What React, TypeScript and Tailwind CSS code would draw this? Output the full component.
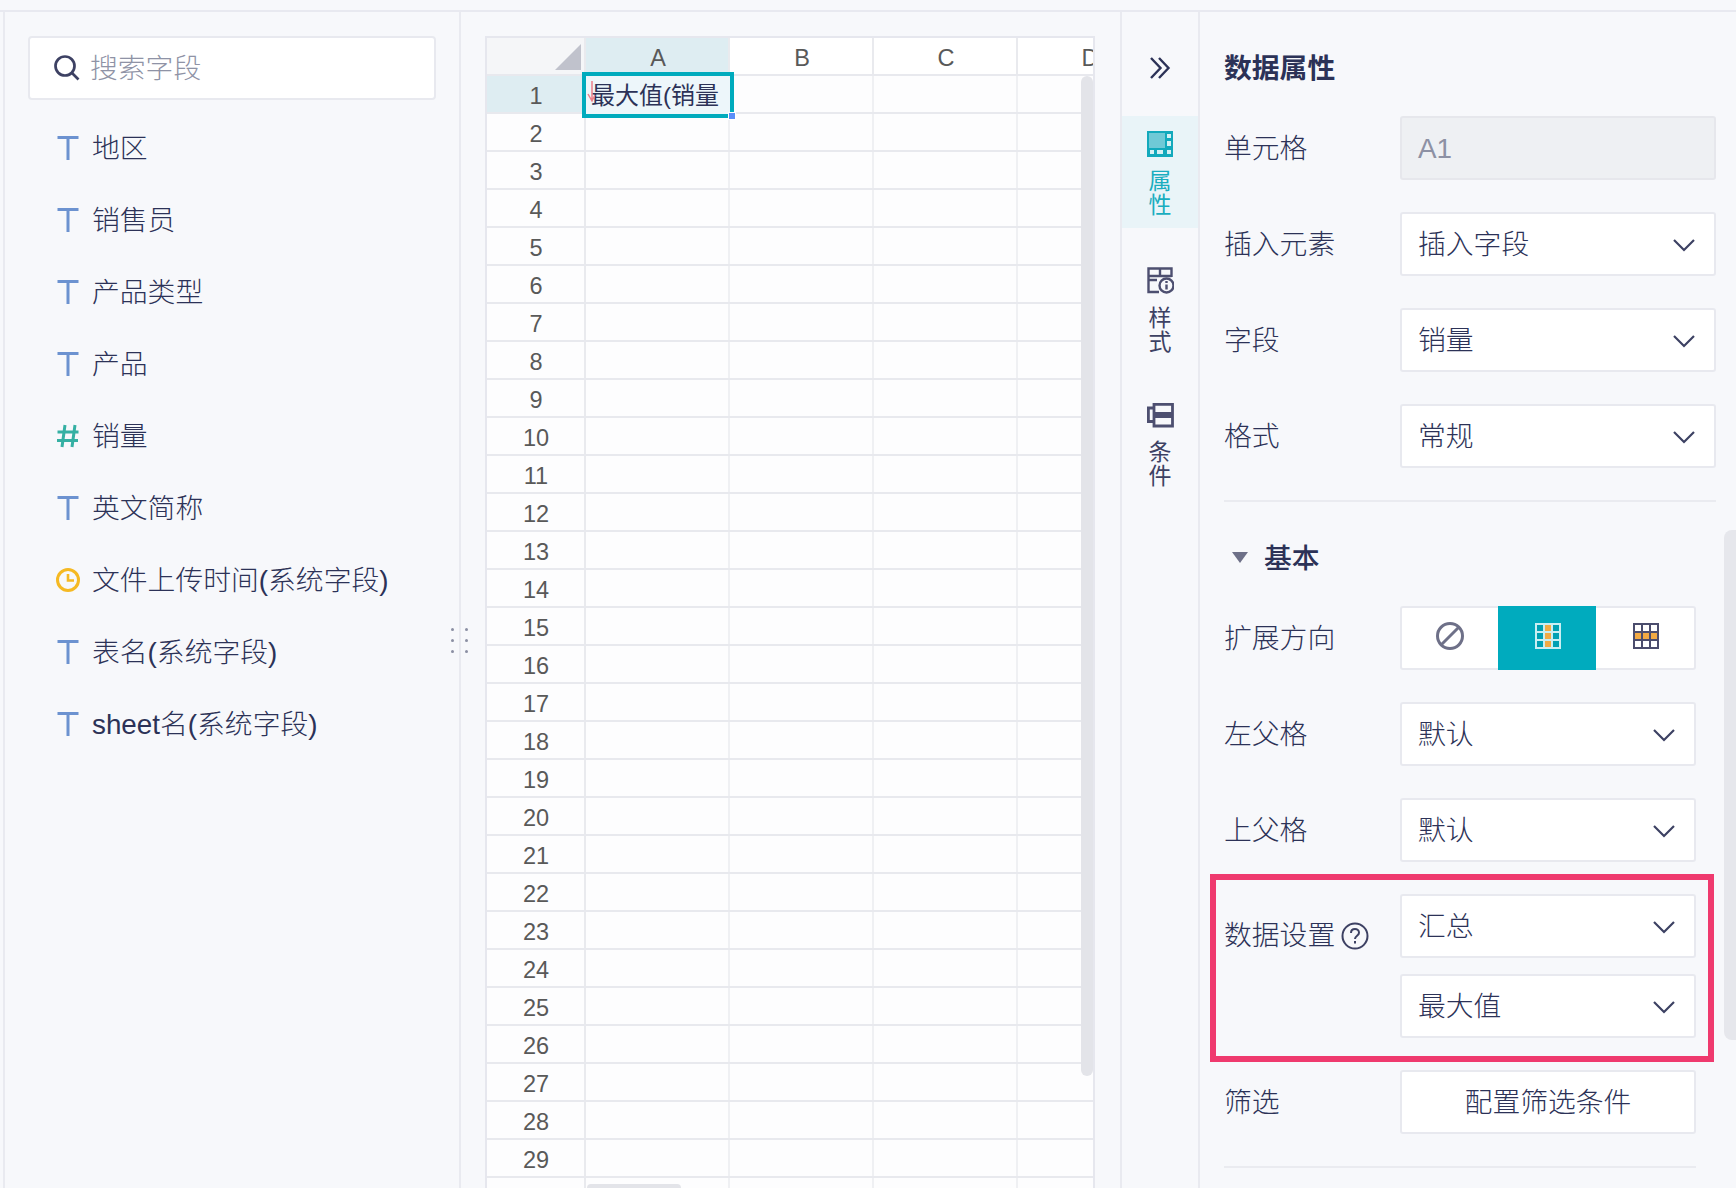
import type { ReactNode } from "react";

const fields = [
  { icon: "t", name: "地区" },
  { icon: "t", name: "销售员" },
  { icon: "t", name: "产品类型" },
  { icon: "t", name: "产品" },
  { icon: "n", name: "销量" },
  { icon: "t", name: "英文简称" },
  { icon: "c", name: "文件上传时间(系统字段)" },
  { icon: "t", name: "表名(系统字段)" },
  { icon: "t", name: "sheet名(系统字段)" },
];

const rows = Array.from({ length: 30 }, (_, i) => i + 1);

function FieldIcon({ kind }: { kind: string }) {
  if (kind === "n") {
    return (
      <svg width="26" height="26" viewBox="0 0 26 26" fill="none" stroke="#35b0a3" strokeWidth="3">
        <path d="M10 2 7 24M20 2l-3 22M2.500 9h21M2 17.500h21" />
      </svg>
    );
  }
  if (kind === "c") {
    return (
      <svg width="26" height="26" viewBox="0 0 26 26" fill="none" stroke="#f5b923" strokeWidth="3">
        <circle cx="13" cy="13" r="10.500" />
        <path d="M13 7v6.500h6" strokeWidth="2.600" />
      </svg>
    );
  }
  return (
    <svg width="26" height="26" viewBox="0 0 26 26" fill="none" stroke="#6c92d0" strokeWidth="3">
      <path d="M2.500 2.500h21M13 2.500V25" />
    </svg>
  );
}

function Chevron() {
  return (
    <svg className="mt-[2px]" width="24" height="14" viewBox="0 0 24 14" fill="none" stroke="#3d4163" strokeWidth="2.200">
      <path d="m2 2 10 10L22 2" />
    </svg>
  );
}

function Select({ value }: { value: string }) {
  return (
    <div className="flex h-16 flex-1 items-center justify-between rounded-[3px] border-2 border-[#e8e9ef] bg-white pr-[18px] pl-[16px]">
      <span className="pt-[2px]">{value}</span>
      <Chevron />
    </div>
  );
}

function FormRow({ label, wide, children }: { label: ReactNode; wide?: boolean; children: ReactNode }) {
  return (
    <div className={wide ? "mb-8 flex items-center pr-5" : "mb-8 flex items-center pr-10"}>
      <div className="w-[176px] shrink-0 pt-[2px]">{label}</div>
      {children}
    </div>
  );
}

function Tab({ icon, label, active }: { icon: ReactNode; label: string; active?: boolean }) {
  return (
    <div
      className={
        active
          ? "flex h-[112px] flex-col items-center bg-[#e9f4f8] pt-[15px] text-[#19adbf]"
          : "flex h-[112px] flex-col items-center pt-[15px] text-[#3d4163]"
      }
    >
      {icon}
      <div className="mt-[12px] w-[23px] text-[23px] leading-[24px] font-normal">{label}</div>
    </div>
  );
}

export default function App() {
  return (
    <div className="flex h-screen flex-col overflow-hidden bg-[#f7f8fb] text-[27.800px] leading-10 font-light text-[#2c3257] [font-family:'Liberation_Sans','Noto_Sans_CJK_SC',sans-serif]">
      <div className="h-3 shrink-0 border-b-2 border-[#e8e9f0]" />
      <div className="flex min-h-0 flex-1">
        {/* field list */}
        <aside className="relative ml-[3px] w-[458px] shrink-0 border-x-2 border-[#e9eaf0] pt-6 pr-[23px] pl-[23px]">
          <div className="flex h-16 items-center rounded-[4px] border-2 border-[#e8e9ef] bg-white pl-[24px] text-[#8f93a6]">
            <svg width="26" height="26" viewBox="0 0 26 26" fill="none" stroke="#3d4163" strokeWidth="2.700">
              <circle cx="11" cy="11" r="9.500" />
              <path d="m18 18 6.500 6.500" />
            </svg>
            <span className="ml-[10px] pt-[2px]">搜索字段</span>
          </div>
          <div className="mt-3">
            {fields.map((f) => (
              <div key={f.name} className="flex h-[72px] items-center pl-[27px]">
                <FieldIcon kind={f.icon} />
                <span className="ml-[11px] pt-[2px]">{f.name}</span>
              </div>
            ))}
          </div>
          <div className="absolute top-[616px] right-[-9px] grid grid-cols-2 gap-x-[11px] gap-y-2">
            {[0, 1, 2, 3, 4, 5].map((d) => (
              <span key={d} className="size-[3px] rounded-full bg-[#8b8fa3]" />
            ))}
          </div>
        </aside>

        {/* sheet */}
        <main className="w-[659px] shrink-0 pt-6 pr-[25px] pl-[24px]">
          <div className="relative h-full overflow-hidden border-x-2 border-t-2 border-[#e6e7ee] bg-[#fdfdfe] text-[23.500px] font-normal text-[#595959]">
            <div className="flex h-[38px] border-b-2 border-[#e8e9ee]">
              <div className="relative w-[99px] shrink-0 border-r-2 border-[#e9eaee] bg-[#f5f6f8]">
                <svg className="absolute top-[6px] right-[3px]" width="26" height="26" viewBox="0 0 26 26">
                  <path d="M26 0v26H0z" fill="#c0c2cc" />
                </svg>
              </div>
              {["A", "B", "C", "D"].map((c) => (
                <div
                  key={c}
                  className={
                    c === "A"
                      ? "flex w-[144px] shrink-0 items-center justify-center border-r-2 border-[#e9eaee] bg-[#deedf2] pt-[6px] pl-[2px] leading-none"
                      : "flex w-[144px] shrink-0 items-center justify-center border-r-2 border-[#e9eaee] bg-white pt-[6px] pl-[2px] leading-none"
                  }
                >
                  {c}
                </div>
              ))}
            </div>
            {rows.map((r) => (
              <div key={r} className="flex h-[38px] border-b-2 border-[#e8e9ee]">
                <div
                  className={
                    r === 1
                      ? "flex w-[99px] shrink-0 items-center justify-center border-r-2 border-[#e9eaee] bg-[#deedf2] pt-[5px] pl-[1px] leading-none"
                      : "flex w-[99px] shrink-0 items-center justify-center border-r-2 border-[#e9eaee] pt-[5px] pl-[1px] leading-none"
                  }
                >
                  {r < 30 ? r : ""}
                </div>
                <div className="w-[144px] shrink-0 border-r-2 border-[#eff0f3]" />
                <div className="w-[144px] shrink-0 border-r-2 border-[#eff0f3]" />
                <div className="w-[144px] shrink-0 border-r-2 border-[#eff0f3]" />
                <div className="w-[144px] shrink-0" />
              </div>
            ))}

            {/* selected cell */}
            <div className="absolute top-[34px] left-[95px] flex h-[46px] w-[152px] items-center border-4 border-[#00abbd] bg-[#edf6fa] pt-[2px] pl-[5px] text-[24px] whitespace-nowrap text-[#2c3257]">
              最大值(销量
              <svg className="absolute top-[5px] left-[1px]" width="9" height="22" viewBox="0 0 9 22" fill="none" stroke="#ee7f8a" strokeWidth="1.500">
                <path d="M5 0v20M1 13l4 7 3-6" />
              </svg>
            </div>
            <div className="absolute top-[74px] left-[241px] size-[8px] border border-white bg-[#5b8ff9]" />

            {/* scrollbars */}
            <div className="absolute top-[38px] right-0 h-[1000px] w-3 rounded-full bg-[#e3e4e9]" />
            <div className="absolute bottom-0 left-[100px] h-[4px] w-[94px] rounded-t-[4px] bg-[#e3e4e9]" />
          </div>
        </main>

        {/* tab rail */}
        <nav className="w-[80px] shrink-0 border-x-2 border-[#e9eaf0]">
          <div className="flex h-[104px] justify-center pt-[45px]">
            <svg width="22" height="22" viewBox="0 0 22 22" fill="none" stroke="#2c3257" strokeWidth="2.400">
              <path d="m2 1 9.500 10L2 21M10 1l9.500 10L10 21" />
            </svg>
          </div>
          <div className="flex flex-col gap-6">
            <Tab
              active
              label="属性"
              icon={
                <svg width="26" height="26" viewBox="0 0 26 26">
                  <rect width="26" height="26" fill="#12a9bc" />
                  <rect x="2" y="2" width="16" height="15" fill="#6fc9d6" />
                  <path d="M20 3h4v4h-4zM20 10h4v5h-4zM20 19h4v4h-4zM3 19h4v4H3zM10 19h6v4h-6z" fill="#d5f0f4" />
                </svg>
              }
            />
            <Tab
              label="样式"
              icon={
                <svg width="27" height="27" viewBox="0 0 27 27" fill="none" stroke="#4d4f70" strokeWidth="2.400">
                  <path d="M12 25H1.500V1.500h23V10M1.500 13H10M13 1.500V10M1.500 9h23" />
                  <circle cx="19.500" cy="18.500" r="7" fill="#f7f8fb" />
                  <path d="M19.500 17.500v5M19.500 14v2" />
                </svg>
              }
            />
            <Tab
              label="条件"
              icon={
                <svg width="27" height="25" viewBox="0 0 27 25" fill="none" stroke="#4d4f70" strokeWidth="2.800">
                  <path d="M7 1.400h18.500V10.500H7zM7 13.500h18.500v9.500H7zM7 5H1.400v13.500H7" />
                </svg>
              }
            />
          </div>
        </nav>

        {/* properties */}
        <section className="relative min-w-0 flex-1 pl-6">
          <div className="h-[104px] pt-[37px] font-bold">数据属性</div>

          <FormRow wide label="单元格">
            <div className="flex h-16 flex-1 items-center rounded-[3px] border-2 border-[#e6e7ec] bg-[#eef0f3] pt-[2px] pl-[16px] text-[#8d91a4]">
              A1
            </div>
          </FormRow>
          <FormRow wide label="插入元素">
            <Select value="插入字段" />
          </FormRow>
          <FormRow wide label="字段">
            <Select value="销量" />
          </FormRow>
          <FormRow wide label="格式">
            <Select value="常规" />
          </FormRow>

          <div className="mr-5 h-[2px] bg-[#eaebf0]" />

          <div className="flex h-[104px] items-center pt-[6px] pl-[8px] font-medium">
            <svg width="16" height="11" viewBox="0 0 16 11">
              <path d="M0 0h16L8 11z" fill="#6e7088" />
            </svg>
            <span className="ml-[16px] pt-[3px]">基本</span>
          </div>

          <FormRow label="扩展方向">
            <div className="flex h-16 flex-1 rounded-[3px] border-2 border-[#e8e9ef] bg-white">
              <div className="flex w-[96px] items-center justify-center pb-1">
                <svg width="30" height="30" viewBox="0 0 30 30" fill="none" stroke="#6e7088" strokeWidth="3">
                  <circle cx="15" cy="15" r="12.500" />
                  <path d="M6.500 23.500 23.500 6.500" />
                </svg>
              </div>
              <div className="-my-[2px] flex w-[98px] items-center justify-center bg-[#00abbe] pb-1 pl-[1px]">
                <svg width="26" height="26" viewBox="0 0 26 26">
                  <rect width="26" height="26" fill="#c9eef2" />
                  <path d="M2 2h6v6H2zM2 10h6v6H2zM2 18h6v6H2zM18 2h6v6h-6zM18 10h6v6h-6zM18 18h6v6h-6z" fill="#00a0b3" />
                  <path d="M10 2h6v6h-6zM10 10h6v6h-6zM10 18h6v6h-6z" fill="#f2aa44" />
                </svg>
              </div>
              <div className="flex flex-1 items-center justify-center pb-1 pl-[1px]">
                <svg width="26" height="26" viewBox="0 0 26 26">
                  <rect width="26" height="26" fill="#4b4d6d" />
                  <path d="M2 2h6v6H2zM10 2h6v6h-6zM18 2h6v6h-6zM2 18h6v6H2zM10 18h6v6h-6zM18 18h6v6h-6z" fill="#fff" />
                  <path d="M2 10h6v6H2zM10 10h6v6h-6zM18 10h6v6h-6z" fill="#f2aa44" />
                </svg>
              </div>
            </div>
          </FormRow>
          <FormRow label="左父格">
            <Select value="默认" />
          </FormRow>
          <FormRow label="上父格">
            <Select value="默认" />
          </FormRow>

          <div className="relative mr-10 flex">
            <div className="flex h-20 w-[176px] shrink-0 items-center pt-[3px]">
              数据设置
              <svg className="ml-[6px]" width="28" height="28" viewBox="0 0 28 28" fill="none" stroke="#3d4163" strokeWidth="2">
                <circle cx="14" cy="14" r="12.500" />
                <path d="M10 11c0-2.500 1.800-4 4-4s4 1.500 4 3.700c0 3-4 3-4 6.300M14 19v2.500" />
              </svg>
            </div>
            <div className="grid flex-1 gap-4">
              <Select value="汇总" />
              <Select value="最大值" />
            </div>
            <div className="absolute -top-5 -right-[18px] -bottom-6 -left-[14px] border-[6px] border-[#ef3a6e]" />
          </div>

          <div className="mt-[32px] mb-8 flex items-center pr-10">
            <div className="w-[176px] shrink-0 pt-[2px]">筛选</div>
            <div className="flex h-16 flex-1 items-center justify-center rounded-[3px] border-2 border-[#e8e9ef] bg-white pt-[2px]">
              配置筛选条件
            </div>
          </div>
          <div className="mr-10 h-[2px] bg-[#eaebf0]" />

          <div className="absolute top-[518px] right-0 h-[510px] w-3 rounded-l-lg bg-[#e6e7ec]" />
        </section>
      </div>
    </div>
  );
}
